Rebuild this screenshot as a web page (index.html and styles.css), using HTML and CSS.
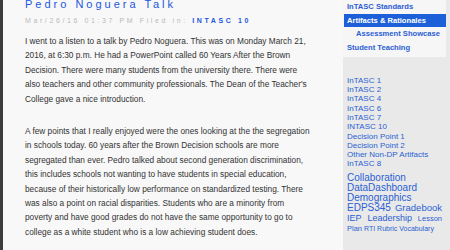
FILE: index.html
```html
<!DOCTYPE html>
<html lang="en">
<head>
  <meta charset="UTF-8">
  <title>Pedro Noguera Talk</title>
  <link rel="stylesheet" href="styles.css">
</head>
<body>
  <div class="page">
    <main class="content">
      <h1 class="post-title">Pedro Noguera Talk</h1>
      <div class="post-meta">Mar/26/16 01:37 PM Filed in: <a href="#">INTASC 10</a></div>

      <p>I went to a listen to a talk by Pedro Noguera. This was on Monday March 21, 2016, at 6:30 p.m. He had a PowerPoint called 60 Years After the Brown Decision. There were many students from the university there. There were also teachers and other community professionals. The Dean of the Teacher's College gave a nice introduction.</p>

      <p>A few points that I really enjoyed were the ones looking at the the segregation in schools today. 60 years after the Brown Decision schools are more segregated than ever. Pedro talked about second generation discrimination, this includes schools not wanting to have students in special education, because of their historically low performance on standardized testing. There was also a point on racial disparities. Students who are a minority from poverty and have good grades do not have the same opportunity to go to college as a white student who is a low achieving student does.</p>

      <p>I linked this to inTasc 10 because I believe this is part of leadership and collaboration with the community.</p>
    </main>

    <aside class="sidebar">
      <nav class="nav">
        <a href="#">InTASC Standards</a>
        <a href="#" class="current">Artifacts &amp; Rationales</a>
        <a href="#" class="sub">Assessment Showcase</a>
        <a href="#">Student Teaching</a>
      </nav>

      <ul class="categories">
        <li><a href="#">InTASC 1</a></li>
        <li><a href="#">InTASC 2</a></li>
        <li><a href="#">InTASC 4</a></li>
        <li><a href="#">InTASC 6</a></li>
        <li><a href="#">InTASC 7</a></li>
        <li><a href="#">INTASC 10</a></li>
        <li><a href="#">Decision Point 1</a></li>
        <li><a href="#">Decision Point 2</a></li>
        <li><a href="#">Other Non-DP Artifacts</a></li>
        <li><a href="#">InTASC 8</a></li>
      </ul>

      <div class="tags">
        <a href="#" class="t1">Collaboration</a>
        <a href="#" class="t1">DataDashboard</a>
        <a href="#" class="t1">Demographics</a>
        <a href="#" class="t1">EDPS345</a>
        <a href="#" class="t2">Gradebook</a>
        <a href="#" class="t3">IEP</a>
        <a href="#" class="t3">Leadership</a>
        <a href="#" class="t4">Lesson Plan</a>
        <a href="#" class="t5">RTI</a>
        <a href="#" class="t5">Rubric</a>
        <a href="#" class="t5">Vocabulary</a>
      </div>
    </aside>
  </div>
</body>
</html>
```

FILE: styles.css
```css
body {
  margin: 0;
  font-family: "Liberation Sans", Arial, sans-serif;
  background-color: #e9e9e9;
  overflow: hidden;
}

a {
  text-decoration: none;
  color: #2b5fd4;
}

.page {
  display: flex;
  height: 250px;
}

.content {
  width: 288px;
  flex-shrink: 0;
  background-color: #f8f8f8;
  border-left: 3px solid #3c3c3c;
  padding: 0 30px 0 22px;
  color: #333;
}

.post-title {
  margin: -3px 0 0;
  font-size: 11px;
  font-weight: normal;
  letter-spacing: 3px;
  color: #2157dd;
  line-height: 14px;
}

.post-meta {
  margin-top: 5px;
  font-size: 7px;
  letter-spacing: 2.6px;
  color: #b8b8b8;
  line-height: 10px;
}

.post-meta a {
  font-weight: bold;
  color: #2157dd;
}

.content p {
  margin: 8px 0 18px;
  font-size: 8.3px;
  line-height: 14.4px;
}

.sidebar {
  flex: 1;
  padding-right: 4px;
}

.nav {
  display: flex;
  flex-direction: column;
  background-color: #f6f6f6;
  padding-bottom: 2px;
}

.nav a {
  font-size: 7.6px;
  font-weight: bold;
  line-height: 13.7px;
  padding-left: 4px;
  color: #2b5fd4;
  white-space: nowrap;
}

.nav a.current {
  background-color: #1c5fd9;
  color: #fff;
  margin-left: 1px;
  padding-left: 3px;
}

.nav a.sub {
  padding-left: 13px;
}

.categories {
  list-style: none;
  margin: 19px 0 0;
  padding: 0 0 0 4px;
}

.categories li {
  font-size: 8px;
  line-height: 9.3px;
}

.tags {
  margin: 5px 4px 0 4px;
  font-size: 7px;
  line-height: 10px;
  text-align: justify;
}

.tags a {
  white-space: nowrap;
  line-height: 8px;
}

.tags .t1 {
  font-size: 10px;
}

.tags .t2 {
  font-size: 9.5px;
}

.tags .t3 {
  font-size: 9px;
}

.tags .t4 {
  font-size: 7.5px;
  white-space: normal;
}

.tags .t5 {
  font-size: 7px;
}
```
